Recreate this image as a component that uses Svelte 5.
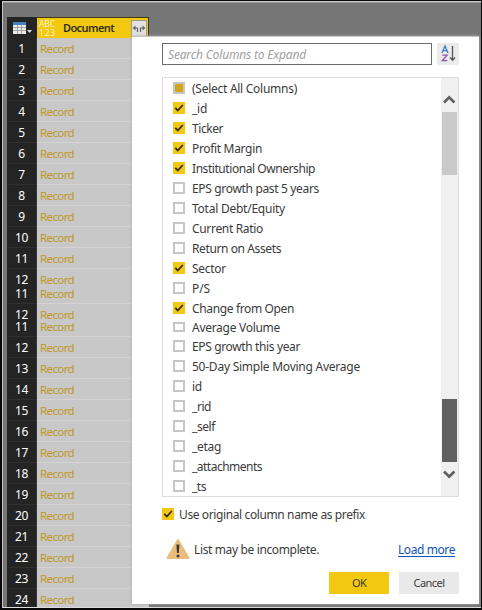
<script>
  const row = (n, h = 21) => ({ lines: [n], h, pad: 0 });
  const records = [
    ...Array.from({ length: 11 }, (_, i) => row(i + 1)),
    { lines: [12, 11], h: 35, gap: 14, pad: 4 },
    { lines: [12, 11], h: 33, gap: 12, pad: 5 },
    ...Array.from({ length: 13 }, (_, i) => row(i + 12))
  ];
  // label, state, rendered label width, row height
  const columns = [
    ['(Select All Columns)', 'some', 105, 20],
    ['_id', 'on', 15, 20],
    ['Ticker', 'on', 31, 20],
    ['Profit Margin', 'on', 70, 20],
    ['Institutional Ownership', 'on', 123, 20],
    ['EPS growth past 5 years', 'off', 127, 20],
    ['Total Debt/Equity', 'off', 93, 20],
    ['Current Ratio', 'off', 71, 20],
    ['Return on Assets', 'off', 89, 20],
    ['Sector', 'on', 34, 20],
    ['P/S', 'off', 18, 20],
    ['Change from Open', 'on', 102, 20],
    ['Average Volume', 'off short', 88, 18],
    ['EPS growth this year', 'off', 108, 20],
    ['50-Day Simple Moving Average', 'off', 168, 20],
    ['id', 'off', 10, 20],
    ['_rid', 'off', 19, 20],
    ['_self', 'off', 23, 20],
    ['_etag', 'off', 29, 20],
    ['_attachments', 'off', 70, 20],
    ['_ts', 'off', 14, 20]
  ];
  // Spreads or tightens a label's letters to the given width.
  function fit(node, width) {
    const natural = node.getBoundingClientRect().width;
    node.style.letterSpacing = (width - natural) / node.textContent.length + 'px';
  }
</script>

{#snippet box(state)}
  <span class="check {state}">
    {#if state === 'on'}
      <svg width="12" height="12" viewBox="0 0 12 12"><path d="M2.3 5.8 4.8 8.5 9.8 3" fill="none" stroke="#2c2a20" stroke-width="1.7" /></svg>
    {/if}
  </span>
{/snippet}

<div class="window">
  <div class="table">
    <div class="head">
      <div class="corner">
        <svg width="30" height="21" viewBox="0 0 30 21">
          <path fill="#e9e9e6" d="M6 5h13v12H6z" /><path fill="#4382bd" d="M6 5h13v3H6z" />
          <path d="M6 10.5h13M6 13.5h13M10.5 8v9M14.5 8v9" stroke="#8a8f94" stroke-width=".7" />
          <path d="M20 13h5l-2.5 3z" fill="#ddd" />
        </svg>
      </div>
      <div class="title">
        <div class="type"><span use:fit={16}>ABC</span><span use:fit={17}>123</span></div>
        <b use:fit={51}>Document</b>
        <div class="expand">
          <svg width="16" height="17" viewBox="0 0 16 17" fill="none" stroke="#666" stroke-width="1.2"><path d="M6.5 12V8H3M9.5 12V8H13" /><path d="M4.5 5.5 1.5 8 4.5 10.5zM11.5 5.5 14.5 8 11.5 10.5z" fill="#666" stroke="none" /></svg>
        </div>
      </div>
    </div>
    {#each records as r}
      <div class="row" style:height="{r.h}px">
        <div class="num" style:padding-top="{r.pad}px">{#each r.lines as n}<span style:height="{r.gap ?? 21}px" style:line-height="{r.gap ?? 21}px">{n}</span>{/each}</div>
        <div class="cell" style:padding-top="{r.pad}px">{#each r.lines as n}<span style:height="{r.gap ?? 21}px" style:line-height="{r.gap ?? 21}px"><i use:fit={34}>Record</i></span>{/each}</div>
      </div>
    {/each}
  </div>

  <div class="dialog">
    <div class="search">
      <div class="input"><em use:fit={138}>Search Columns to Expand</em></div>
      <div class="sort">
        <svg width="22" height="22" viewBox="0 0 22 22" fill="none" stroke-width="1.3">
          <path d="m5 10 3-7 3 7M6 7.7h4" stroke="#3c7fc0" /><path d="M5.3 12.2h4.8l-4.8 5.5h5" stroke="#9454b8" />
          <path d="M15.5 3v14M13 14.5l2.5 2.8 2.5-2.8" stroke="#555" />
        </svg>
      </div>
    </div>
    <div class="list">
      <div class="items">
        {#each columns as [label, state, width, h]}
          <div class="item" style:height="{h}px">{@render box(state)}<span class="label" use:fit={width}>{label}</span></div>
        {/each}
      </div>
      <div class="scroll">
        <svg width="17" height="34" viewBox="0 0 17 34"><path d="M3 24.5 8.2 19.3 13.4 24.5" fill="none" stroke="#606060" stroke-width="2.7" /></svg>
        <div class="thumb light"></div>
        <div class="track"></div>
        <div class="thumb dark"></div>
        <svg width="17" height="34" viewBox="0 0 17 34"><path d="M3 9.5 8.2 14.7 13.4 9.5" fill="none" stroke="#606060" stroke-width="2.7" /></svg>
      </div>
    </div>
    <div class="prefix">{@render box('on')}<span class="text" use:fit={186}>Use original column name as prefix</span></div>
    <div class="notice">
      <svg width="24" height="22" viewBox="0 0 24 22"><path d="M12 2 22.5 20h-21z" fill="#ebbd7c" stroke="#ebbd7c" stroke-width="2" stroke-linejoin="round" /><path d="M10.4 6.5h3l-.6 8.5h-1.8z" fill="#383838" /><circle cx="12" cy="18" r="1.5" fill="#383838" /></svg>
      <span class="msg" use:fit={125}>List may be incomplete.</span>
      <a href="#more" use:fit={57}>Load more</a>
    </div>
    <div class="buttons">
      <button class="ok"><span use:fit={14}>OK</span></button>
      <button><span use:fit={31}>Cancel</span></button>
    </div>
  </div>
</div>

<style>
  .window {
    box-sizing: border-box; position: relative; width: 482px; height: 610px; overflow: hidden;
    background: #767676; border: solid #080808; border-width: 1px 1px 2px 2px;
    box-shadow: inset 1px 1px #c6c6c6, inset 0 -1px #ddd, inset 0 2px #999;
    padding: 16px 0 0 5px; font: 12px/20px "Noto Sans", "Open Sans", sans-serif; color: #3b3b3b;
  }
  .table { width: 142px; height: 590px; overflow: hidden; }
  .head { display: flex; height: 21px; }
  .corner { width: 30px; background: #242424; }
  .title { flex: 1; box-sizing: border-box; display: flex; align-items: center; background: #f2c811; border-top: 1px solid #403811; border-right: 1px solid #39341b; }
  .type { display: flex; flex-direction: column; width: 22px; padding-left: 2px; font-size: 8.5px; line-height: 9px; color: #fff3c2; }
  .type span { align-self: flex-start; white-space: nowrap; }
  b { margin-left: 2px; font-size: 11px; font-weight: 600; color: #333018; }
  .expand { margin-left: auto; width: 16px; height: 17px; background: #e1e1e1; outline: 1px solid #9c9c91; outline-offset: -1px; margin-right: 1px; }
  .row { display: flex; }
  .num { box-sizing: border-box; width: 30px; background: #242424; border-bottom: 1px solid #303030; color: #fff; border-right: 1px solid #383838; }
  .num span, .cell span { display: flex; align-items: center; justify-content: center; }
  .num span { font-size: 12px; letter-spacing: -0.4px; }
  .cell { box-sizing: border-box; flex: 1; background: #c8c8c8; border-bottom: 1px solid #d4d4d4; padding-left: 3px; }
  .cell span { justify-content: flex-start; }
  .cell i { font-style: normal; font-size: 11.5px; color: #bf9826; }

  .dialog {
    box-sizing: border-box; position: absolute; left: 130px; top: 35px; width: 347px; height: 568px;
    background: #fff; border-top: 1px solid #c8c8c8; box-shadow: 0 0 3px #aaa; padding: 6px 18px 0 30px;
    white-space: nowrap;
  }
  .search { display: flex; justify-content: space-between; width: 297px; height: 22px; }
  .input { box-sizing: border-box; width: 270px; border: 1px solid #6b6b6b; padding-left: 5px; line-height: 21px; color: #a0a0a0; }
  .input em { font-size: 12px; }
  .sort { width: 22px; background: #ebebeb; }
  svg { display: block; }
  .list { box-sizing: border-box; display: flex; width: 297px; height: 420px; margin-top: 12px; border: 1px solid #dedede; }
  .items { flex: 1; padding: 0 0 0 10px; }
  .item { display: flex; align-items: center; }
  .label { margin-left: 7px; padding-top: 2px; font-size: 12px; }
  .check { box-sizing: border-box; flex: none; width: 12px; height: 12px; border: 2px solid #c6c6c6; background: #fff; }
  .check.on { border: 0; background: #f2c811; }
  .check.some { background: #d2a41c; }
  .check.short { height: 10px; }
  .scroll { display: flex; flex-direction: column; width: 17px; background: #f0f0f0; }
  .thumb { width: 15px; height: 63px; margin-left: 1px; }
  .light { background: #c9c9c9; }
  .dark { background: #606060; }
  .track { flex: 1; }
  .prefix { display: flex; align-items: center; height: 20px; margin-top: 7px; font-size: 12px; }
  .text { margin-left: 5px; padding-top: 2px; }
  .notice { display: flex; align-items: center; height: 24px; margin: 13px 0 0 4px; font-size: 12px; width: 289px; }
  .msg { margin-left: 4px; padding-top: 1px; }
  a { margin-left: auto; padding-top: 1px; color: #1155bb; text-decoration: underline; text-underline-offset: 2px; }
  .buttons { display: flex; gap: 10px; justify-content: flex-end; width: 297px; margin-top: 11px; }
  button { width: 60px; height: 22px; padding: 0; border: 0; background: #e9e9e9; font: 11px/20px "Noto Sans", sans-serif; color: #3b3b3b; }
  .ok { background: #f2c811; }
</style>
